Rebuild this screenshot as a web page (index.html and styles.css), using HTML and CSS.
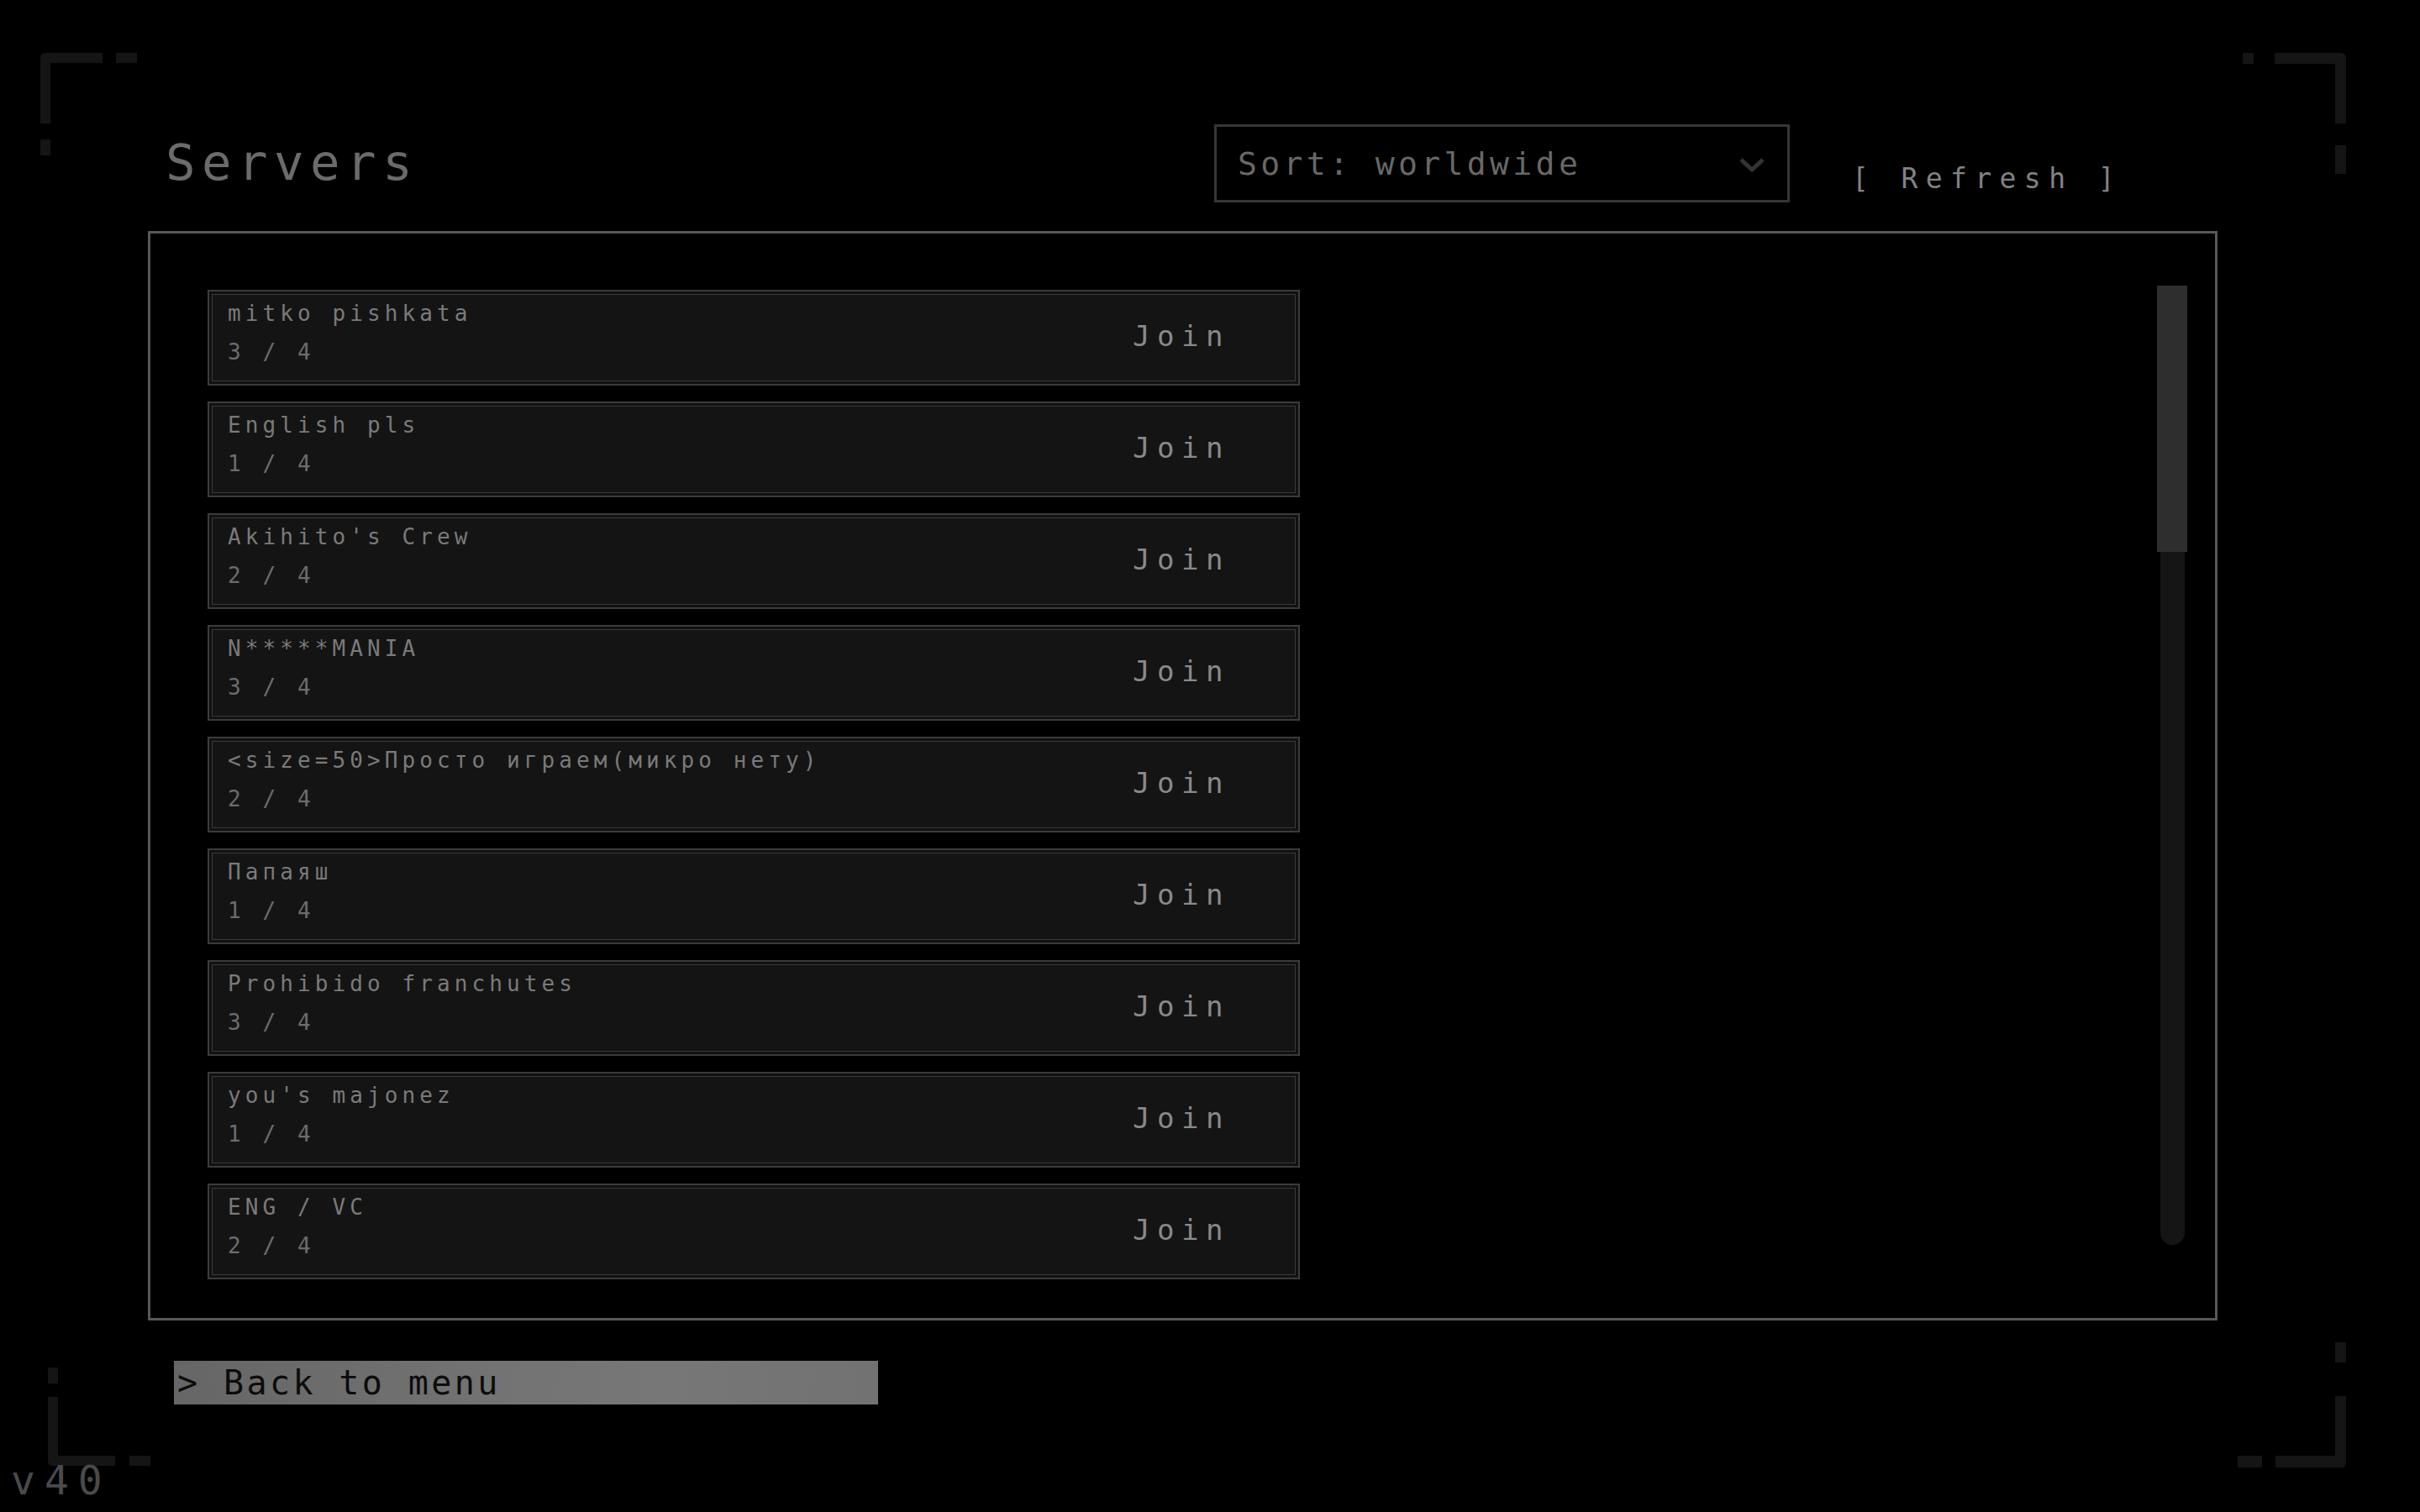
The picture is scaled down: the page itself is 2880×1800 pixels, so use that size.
FILE: index.html
```html
<!DOCTYPE html>
<html lang="en">
<head>
<meta charset="utf-8">
<title>Servers</title>
<link rel="stylesheet" href="styles.css">
</head>
<body>
<svg class="corners" width="2880" height="1800" viewBox="0 0 2880 1800" aria-hidden="true">
  <g fill="#151515">
    <path d="M54 63 H122 V75 H60 V147 H48 V69 Q48 63 54 63 Z"/>
    <rect x="138" y="63" width="25" height="12"/>
    <rect x="48" y="166" width="12" height="19"/>
    <path d="M2707 63 H2786 Q2792 63 2792 69 V147 H2779 V76 H2707 Z"/>
    <rect x="2669" y="63" width="13" height="13"/>
    <rect x="2779" y="173" width="13" height="34"/>
    <path d="M57 1663 H69 V1733 H137 V1745 H63 Q57 1745 57 1739 Z"/>
    <rect x="57" y="1628" width="12" height="19"/>
    <rect x="154" y="1733" width="25" height="12"/>
    <path d="M2779 1662 H2792 V1741 Q2792 1747 2786 1747 H2708 V1733 H2779 Z"/>
    <rect x="2779" y="1598" width="13" height="24"/>
    <rect x="2663" y="1733" width="29" height="14"/>
  </g>
</svg>

<main class="screen">
  <header class="header">
    <h1 class="title">Servers</h1>
    <div class="sort">
      <span class="sort-label">Sort: worldwide</span>
      <svg class="chevron" width="32" height="18" viewBox="0 0 32 18" aria-hidden="true">
        <polyline points="3,3 16,15 29,3" fill="none" stroke="#343434" stroke-width="5"/>
      </svg>
    </div>
    <div class="refresh">[ Refresh ]</div>
  </header>

  <section class="panel">
    <div class="list">
      <div class="row"><div class="info"><div class="name">mitko pishkata</div><div class="count">3 / 4</div></div><div class="join">Join</div></div>
      <div class="row"><div class="info"><div class="name">English pls</div><div class="count">1 / 4</div></div><div class="join">Join</div></div>
      <div class="row"><div class="info"><div class="name">Akihito's Crew</div><div class="count">2 / 4</div></div><div class="join">Join</div></div>
      <div class="row"><div class="info"><div class="name">N*****MANIA</div><div class="count">3 / 4</div></div><div class="join">Join</div></div>
      <div class="row"><div class="info"><div class="name">&lt;size=50&gt;Просто играем(микро нету)</div><div class="count">2 / 4</div></div><div class="join">Join</div></div>
      <div class="row"><div class="info"><div class="name">Папаяш</div><div class="count">1 / 4</div></div><div class="join">Join</div></div>
      <div class="row"><div class="info"><div class="name">Prohibido franchutes</div><div class="count">3 / 4</div></div><div class="join">Join</div></div>
      <div class="row"><div class="info"><div class="name">you's majonez</div><div class="count">1 / 4</div></div><div class="join">Join</div></div>
      <div class="row"><div class="info"><div class="name">ENG / VC</div><div class="count">2 / 4</div></div><div class="join">Join</div></div>
    </div>
    <div class="scrollbar">
      <div class="track"></div>
      <div class="thumb"></div>
    </div>
  </section>

  <div class="back">&gt; Back to menu</div>
</main>

<div class="version">v40</div>
</body>
</html>
```
FILE: styles.css
```css
html, body {
  margin: 0;
  padding: 0;
}

body {
  width: 2880px;
  height: 1800px;
  background: #000;
  overflow: hidden;
  position: relative;
  font-family: "DejaVu Sans Mono", "Liberation Mono", monospace;
}

.corners {
  position: absolute;
  left: 0;
  top: 0;
  pointer-events: none;
}

.screen {
  padding: 148px 0 0 176px;
  width: 2463px;
}

.header {
  display: flex;
  align-items: flex-start;
  height: 93px;
  padding-left: 21px;
}

.title {
  margin: 16px 0 0 0;
  width: 1248px;
  font-size: 59px;
  line-height: 1;
  font-weight: normal;
  letter-spacing: 7.5px;
  color: #6b6b6b;
}

.sort {
  box-sizing: border-box;
  width: 685px;
  height: 93px;
  border: 3px solid #363636;
  display: flex;
  align-items: center;
  padding: 0 26px 0 25px;
}

.sort-label {
  font-size: 38px;
  line-height: 1;
  letter-spacing: 4.4px;
  color: #686868;
}

.chevron {
  margin-left: auto;
  margin-top: 2px;
}

.refresh {
  margin: 48px 0 0 74px;
  font-size: 33px;
  line-height: 1;
  letter-spacing: 9.4px;
  color: #828282;
  white-space: pre;
}

.panel {
  box-sizing: border-box;
  margin-top: 34px;
  width: 2463px;
  height: 1297px;
  border: 3px solid #585858;
  display: flex;
  align-items: flex-start;
  padding: 67px 0 0 68px;
}

.list {
  width: 1300px;
  display: flex;
  flex-direction: column;
  gap: 19px;
}

.row {
  box-sizing: border-box;
  height: 114px;
  background: #141414;
  border: 2px solid #3b3b3b;
  box-shadow: inset 0 0 0 3px #111, inset 0 0 0 4px #3a3a3a;
  display: flex;
  align-items: center;
  justify-content: space-between;
  padding: 0 81px 0 22px;
}

.info {
  align-self: flex-start;
  padding-top: 3px;
}

.name, .count {
  font-size: 26px;
  line-height: 46px;
  letter-spacing: 5.1px;
  white-space: pre;
}

.name {
  color: #7a7a7a;
}

.count {
  color: #6c6c6c;
}

.join {
  font-size: 34px;
  line-height: 1;
  letter-spacing: 8.5px;
  color: #898989;
  margin-bottom: 5px;
}

.scrollbar {
  position: relative;
  margin: -5px 33px 0 auto;
  width: 36px;
  height: 1142px;
}

.track {
  margin: 0 auto;
  width: 29px;
  height: 100%;
  border-radius: 15px;
  background: #151515;
}

.thumb {
  position: absolute;
  left: 0;
  top: 0;
  width: 36px;
  height: 317px;
  background: #2e2e2e;
}

.back {
  box-sizing: border-box;
  margin: 48px 0 0 31px;
  width: 838px;
  height: 52px;
  padding-left: 4px;
  background: linear-gradient(90deg, #666 0%, #737373 45%, #777 70%, #727272 100%);
  color: #0c0c0c;
  font-size: 40px;
  line-height: 52px;
  letter-spacing: 3.4px;
  white-space: pre;
}

.version {
  position: absolute;
  left: 13px;
  top: 1738px;
  font-size: 48px;
  line-height: 1;
  letter-spacing: 11px;
  color: #4a4a4a;
}
```
